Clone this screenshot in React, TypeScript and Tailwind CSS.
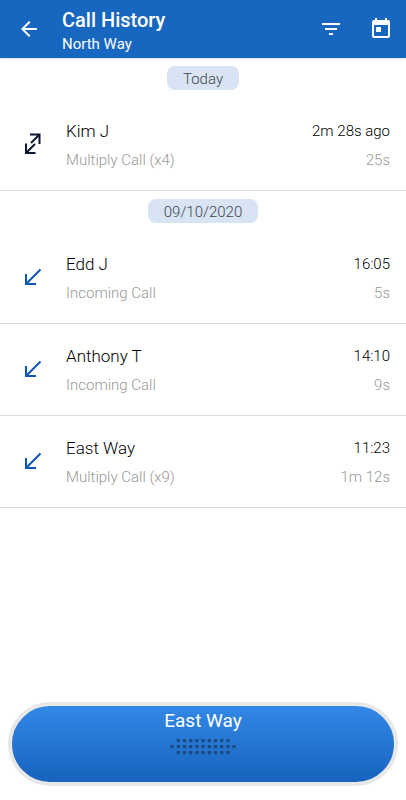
const calls = [
  {
    date: "Today",
    entries: [
      { name: "Kim J", detail: "Multiply Call (x4)", time: "2m 28s ago", duration: "25s", both: true },
    ],
  },
  {
    date: "09/10/2020",
    entries: [
      { name: "Edd J", detail: "Incoming Call", time: "16:05", duration: "5s", both: false },
      { name: "Anthony T", detail: "Incoming Call", time: "14:10", duration: "9s", both: false },
      { name: "East Way", detail: "Multiply Call (x9)", time: "11:23", duration: "1m 12s", both: false },
    ],
  },
];

// Speaker grill: the middle row is one dot longer on each side
const grill = [9, 11, 9];

const IncomingIcon = () => (
  <svg viewBox="0 0 18 18" className="size-[18px]" fill="none" stroke="#0d57b7" strokeWidth="2" aria-hidden="true">
    <path d="M16.5 1.5 L2.5 15.5 M2 6 V16 H12" />
  </svg>
);

const MultiplyIcon = () => (
  <svg viewBox="0 0 18 22" className="h-[22px] w-[18px]" fill="none" stroke="#0b1730" strokeWidth="2" aria-hidden="true">
    <path d="M6 1.5 H15.5 V11 M15.5 1.5 L7 10" />
    <path d="M2 10.5 V20 H11.5 M2 20 L11 11" />
  </svg>
);

const App = () => {
  return (
    <div className="flex min-h-screen flex-col bg-white font-['Roboto',sans-serif]">
      <header className="flex h-[58px] items-center bg-[#1767c0] pr-[13px] pl-[17px] text-white shadow-sm">
        <button aria-label="Back">
          <svg viewBox="0 0 24 24" className="size-6" fill="currentColor">
            <path d="M20 11H7.83l5.59-5.59L12 4l-8 8 8 8 1.41-1.41L7.83 13H20v-2z" />
          </svg>
        </button>
        <div className="ml-[21px] flex-1 pt-1">
          <h1 className="text-[20px] leading-[26px] font-medium">Call History</h1>
          <p className="text-[15px] leading-[22px]">North Way</p>
        </div>
        <button aria-label="Filter" className="mr-[26px]">
          <svg viewBox="0 0 24 24" className="size-6" fill="currentColor">
            <path d="M10 18h4v-2h-4v2zM3 6v2h18V6H3zm3 7h12v-2H6v2z" />
          </svg>
        </button>
        <button aria-label="Pick a date">
          <svg viewBox="0 0 24 24" className="size-6" fill="currentColor">
            <path d="M19 3h-1V1h-2v2H8V1H6v2H5c-1.1 0-2 .9-2 2v14c0 1.1.9 2 2 2h14c1.1 0 2-.9 2-2V5c0-1.1-.9-2-2-2zm0 16H5V8h14v11zM7 10h5v5H7v-5z" />
          </svg>
        </button>
      </header>

      <main className="flex-1">
        {calls.map((group) => (
          <section key={group.date}>
            <div className="flex h-[41px] justify-center pt-2">
              <h2 className="h-6 rounded-lg bg-[#d8e3f3] px-4 text-[15px] leading-[26px] font-light text-[#3f464f]">
                {group.date}
              </h2>
            </div>
            <ul>
              {group.entries.map((call) => (
                <li
                  key={call.name}
                  className="flex h-[92px] items-start border-b border-[#dedede] pt-5 pr-4"
                >
                  <div className="flex h-[50px] w-[66px] items-center justify-center">
                    {call.both ? <MultiplyIcon /> : <IncomingIcon />}
                  </div>
                  <div className="flex flex-1 flex-col gap-[5px]">
                    <span className="text-[17px] leading-6 font-light text-black">{call.name}</span>
                    <span className="text-[15px] leading-6 font-light text-[#989898]">{call.detail}</span>
                  </div>
                  <div className="flex flex-col gap-[5px] text-right">
                    <span className="text-[15px] leading-6 font-light text-black">{call.time}</span>
                    <span className="text-[15px] leading-6 font-light text-[#989898]">{call.duration}</span>
                  </div>
                </li>
              ))}
            </ul>
          </section>
        ))}
      </main>

      <footer className="px-2 pb-[14px]">
        <button className="flex h-[84px] w-full flex-col items-center rounded-full border-4 border-[#e8e8e8] bg-linear-to-b from-[#3388e6] to-[#1763be] pt-[3px] text-[19px] leading-6 text-white">
          East Way
          <svg viewBox="0 0 66 16" className="mt-[6px] h-4 w-[66px]" fill="#194a80" aria-hidden="true">
            {grill.map((count, row) =>
              Array.from({ length: count }, (_, i) => (
                <rect
                  key={`${row}-${i}`}
                  x={31.5 + (i - (count - 1) / 2) * 6.2}
                  y={row * 6}
                  width="3.2"
                  height="3.2"
                />
              ))
            )}
          </svg>
        </button>
      </footer>
    </div>
  );
};

export default App;
